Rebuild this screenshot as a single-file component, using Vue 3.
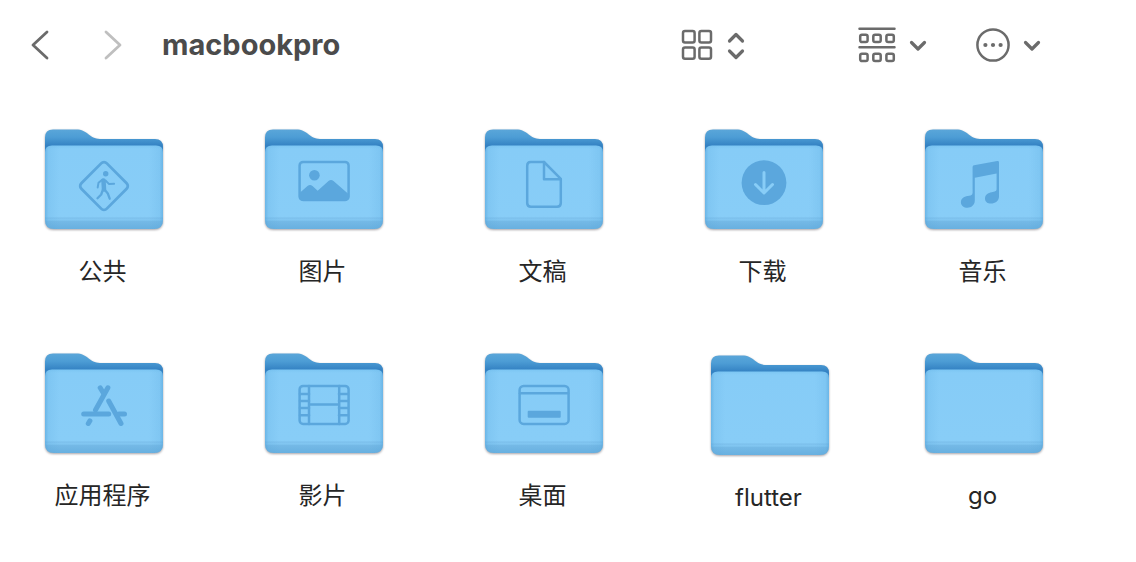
<script setup>
const folders = [
  { name: '公共', icon: 'public' },
  { name: '图片', icon: 'pictures' },
  { name: '文稿', icon: 'documents' },
  { name: '下载', icon: 'downloads' },
  { name: '音乐', icon: 'music' },
  { name: '应用程序', icon: 'apps' },
  { name: '影片', icon: 'movies' },
  { name: '桌面', icon: 'desktop' },
  { name: 'flutter', dx: 6, dy: 2 },
  { name: 'go' }
]

// Front panel of a folder, filled twice: body colour, then edge shading.
const panel = 'M8 17.6H112q7 0 7 7V92q0 9-9 9H10q-9 0-9-9V24.6q0-7 7-7z'

const place = (f) => (f.dx ? { left: f.dx + 'px', top: f.dy + 'px' } : null)
</script>

<template>
  <div class="finder">
    <svg class="defs" width="0" height="0" aria-hidden="true">
      <defs>
        <linearGradient id="back" x1="0" y1="0" x2="0" y2="1">
          <stop offset="0" stop-color="#5aa6d9" />
          <stop offset="0.2" stop-color="#4d9dd5" />
          <stop offset="0.42" stop-color="#3482c3" />
          <stop offset="1" stop-color="#3482c3" />
        </linearGradient>
        <linearGradient id="front" x1="0" y1="0" x2="0" y2="1">
          <stop offset="0" stop-color="#7cc6f3" />
          <stop offset="0.04" stop-color="#86ccf7" />
          <stop offset="0.85" stop-color="#88cdf7" />
          <stop offset="0.87" stop-color="#7cc0ec" />
          <stop offset="0.89" stop-color="#82c7f2" />
          <stop offset="0.91" stop-color="#74b9e6" />
          <stop offset="1" stop-color="#68b0e0" />
        </linearGradient>
        <linearGradient id="sides" x1="0" y1="0" x2="1" y2="0">
          <stop offset="0" stop-color="#4f9fd6" stop-opacity="0.5" />
          <stop offset="0.03" stop-color="#4f9fd6" stop-opacity="0.14" />
          <stop offset="0.12" stop-color="#4f9fd6" stop-opacity="0" />
          <stop offset="0.88" stop-color="#4f9fd6" stop-opacity="0" />
          <stop offset="0.97" stop-color="#4f9fd6" stop-opacity="0.14" />
          <stop offset="1" stop-color="#4f9fd6" stop-opacity="0.5" />
        </linearGradient>
      </defs>
    </svg>

    <header class="toolbar">
      <nav class="history">
        <button type="button" aria-label="后退">
          <svg width="20" height="32" viewBox="0 0 20 32"><path d="M17 3 3 16l14 13" /></svg>
        </button>
        <button type="button" class="off" aria-label="前进" disabled>
          <svg width="20" height="32" viewBox="0 0 20 32"><path d="M3 3l14 13L3 29" /></svg>
        </button>
      </nav>
      <h1>macbookpro</h1>
      <div class="tools">
        <button type="button" class="view" aria-label="显示方式">
          <svg width="32" height="32" viewBox="0 0 32 32">
            <rect x="2" y="2" width="11.6" height="11.4" rx="2" />
            <rect x="18.4" y="2" width="11.6" height="11.4" rx="2" />
            <rect x="2" y="18.4" width="11.6" height="11.4" rx="2" />
            <rect x="18.4" y="18.4" width="11.6" height="11.4" rx="2" />
          </svg>
          <svg class="bold" width="20" height="32" viewBox="0 0 20 32">
            <path d="M3.5 12l6.5-6.5 6.5 6.5M3.5 22l6.5 6.5 6.5-6.5" />
          </svg>
        </button>
        <button type="button" class="group" aria-label="分组">
          <svg width="38" height="36" viewBox="0 0 38 36">
            <path d="M1.5 1.7h35M1.5 20.3h35" />
            <rect x="2.2" y="7.7" width="7.4" height="7.4" rx="1.8" />
            <rect x="15.3" y="7.7" width="7.4" height="7.4" rx="1.8" />
            <rect x="28.4" y="7.7" width="7.4" height="7.4" rx="1.8" />
            <rect x="2.2" y="26.7" width="7.4" height="7.4" rx="1.8" />
            <rect x="15.3" y="26.7" width="7.4" height="7.4" rx="1.8" />
            <rect x="28.4" y="26.7" width="7.4" height="7.4" rx="1.8" />
          </svg>
          <svg class="bold" width="20" height="20" viewBox="0 0 20 20"><path d="M3.5 7.5l6.5 6.5 6.5-6.5" /></svg>
        </button>
        <button type="button" class="more" aria-label="操作">
          <svg width="36" height="36" viewBox="0 0 36 36">
            <circle cx="18" cy="18" r="15.6" />
            <g class="dots">
              <circle cx="10.4" cy="18" r="2.1" />
              <circle cx="18" cy="18" r="2.1" />
              <circle cx="25.6" cy="18" r="2.1" />
            </g>
          </svg>
          <svg class="bold" width="20" height="20" viewBox="0 0 20 20"><path d="M3.5 7.5l6.5 6.5 6.5-6.5" /></svg>
        </button>
      </div>
    </header>

    <main>
      <ul class="grid">
        <li v-for="f in folders" :key="f.name" :style="place(f)">
          <button type="button" class="folder">
            <svg class="art" width="120" height="104" viewBox="0 0 120 104" aria-hidden="true">
              <path
                fill="url(#back)"
                d="M1 40V9.500Q1 1.500 9 1.500H32C38 1.500 41 3.500 45 6.800 49 10 52 11 58 11h53q8 0 8 8v21z"
              />
              <path fill="url(#front)" :d="panel" />
              <path fill="url(#sides)" :d="panel" />

              <g v-if="f.icon === 'public'" class="line">
                <rect x="42" y="40" width="36" height="36" rx="4" transform="rotate(45 60 58)" stroke-width="2.8" />
                <circle class="fill" cx="61.7" cy="45.7" r="2.7" />
                <path d="M59.5 52.5l.5 9" stroke-width="4.5" />
                <path d="M58.5 51.6l-4 3.2-.8 4.6M61.5 52.5l3.6 3.6 5-.3" stroke-width="2" />
                <path d="M58.8 62l-1.6 4.5-3.7 3.8M60.5 61.5l3.3 4 1.9 5.2" stroke-width="2.3" />
              </g>

              <g v-else-if="f.icon === 'pictures'" class="line">
                <rect x="35.6" y="33.9" width="49" height="38" rx="3.5" />
                <circle class="fill" cx="50.4" cy="47.3" r="5.3" />
                <path
                  class="fill"
                  d="M35 65.500l8.500-7.400q2.500-2 5 0l5.200 4.600L64.500 53q2.500-2 5 0L85 66.500V69q0 3.700-3.700 3.700H38.700Q35 72.700 35 69z"
                />
              </g>

              <g v-else-if="f.icon === 'documents'" class="line">
                <path d="M46.700 34H60l16.800 16.800V75q0 3.700-3.700 3.700H46.900q-3.700 0-3.700-3.700V37.700q0-3.700 3.500-3.700z" />
                <path d="M60 34v17.300h16.800" />
              </g>

              <g v-else-if="f.icon === 'downloads'">
                <circle class="fill" cx="60" cy="54.7" r="22.4" />
                <path class="arrow" d="M60 44.500v20M51.500 56.500l8.500 8.500 8.500-8.500" />
              </g>

              <g v-else-if="f.icon === 'music'" class="fill">
                <path
                  d="M50 37.300l23.300-4.200q1.700-.3 1.700 1.300V68.500C75 73 71 75.600 67 75.600c-3.500 0-6-2-6-5.200 0-3.500 3-5.600 6.600-6.200l3-.6q2-.4 2-2.300V45.600l-21.800 4.200V72.500c0 4.600-3.600 7.200-7.300 7.200-3.600 0-6.600-2-6.600-5.500s3-5.600 6.700-6.200l3-.6q2-.4 2-2.300V39q0-1.500 1.400-1.700z"
                />
              </g>

              <g v-else-if="f.icon === 'apps'" class="line app">
                <path d="M63.900 35.800L51.500 58" />
                <path d="M56.200 35.800l3.300 5.500" />
                <path d="M39.700 62h25" />
                <path d="M64.700 49L77 71.500" />
                <path d="M75 62h5.500" />
                <path d="M45.900 68.800l-1.600 2.700" />
              </g>

              <g v-else-if="f.icon === 'movies'" class="line">
                <rect x="35.6" y="33.9" width="49" height="38" rx="3.5" />
                <path d="M45 34v38M75.200 34v38M45 52.500h30" />
                <path
                  d="M36 42h9M36 49h9M36 56h9M36 63.200h9M75 42h9M75 49h9M75 56h9M75 63.200h9"
                  stroke-width="2.6"
                />
              </g>

              <g v-else-if="f.icon === 'desktop'" class="line">
                <rect x="35.6" y="33.9" width="49" height="38" rx="4" />
                <path d="M36 41.200h48" />
                <rect class="fill" x="43.7" y="58.8" width="33" height="7" rx="1" />
              </g>
            </svg>
            <span class="name">{{ f.name }}</span>
          </button>
        </li>
      </ul>
    </main>
  </div>
</template>

<style>
body {
  background: #fff;
}
</style>

<style scoped>
.finder {
  font-family: Inter, "Noto Sans CJK SC", sans-serif;
  color: #262626;
}
.defs {
  position: absolute;
}
button {
  display: flex;
  align-items: center;
  margin: 0;
  padding: 0;
  border: 0;
  background: none;
  color: inherit;
  font: inherit;
}
svg {
  display: block;
  flex: none;
}
.toolbar {
  display: flex;
  align-items: center;
  height: 90px;
  padding: 0 94px 0 30px;
  color: #6b6b6b;
}
.toolbar svg {
  fill: none;
  stroke: currentColor;
  stroke-width: 2.5;
  stroke-linecap: round;
  stroke-linejoin: round;
}
.toolbar .bold {
  stroke-width: 3.2;
}
.toolbar .dots {
  fill: currentColor;
  stroke: none;
}
.history {
  display: flex;
  gap: 53px;
}
.toolbar .history svg {
  stroke-width: 2.8;
}
.history .off {
  color: #bfbfbf;
}
h1 {
  margin: 0 0 0 39px;
  color: #4b4b4b;
  font-size: 29px;
  font-weight: 700;
  line-height: 36px;
}
.tools {
  display: flex;
  align-items: center;
  margin-left: auto;
}
.view {
  gap: 13px;
  margin-right: 112px;
}
.group {
  gap: 12px;
  margin-right: 47px;
}
.more {
  gap: 11px;
}
.grid {
  display: grid;
  grid-template-columns: repeat(5, 120px);
  justify-content: space-between;
  row-gap: 64px;
  margin: 0;
  padding: 38px 92px 42px 44px;
  list-style: none;
}
li {
  position: relative;
}
.folder {
  flex-direction: column;
  gap: 24px;
  width: 100%;
}
.art {
  filter: drop-shadow(0 1px 1px rgba(60, 50, 60, 0.45));
}
.name {
  padding-right: 3px;
  font-size: 24px;
  line-height: 32px;
  white-space: nowrap;
}
.line {
  fill: none;
  stroke: #5ba7dd;
  stroke-width: 2.5;
  stroke-linecap: round;
  stroke-linejoin: round;
}
.app {
  stroke-width: 5;
}
.fill {
  fill: #5ba7dd;
  stroke: none;
}
.arrow {
  fill: none;
  stroke: #88cdf7;
  stroke-width: 3;
  stroke-linecap: round;
  stroke-linejoin: round;
}
</style>
